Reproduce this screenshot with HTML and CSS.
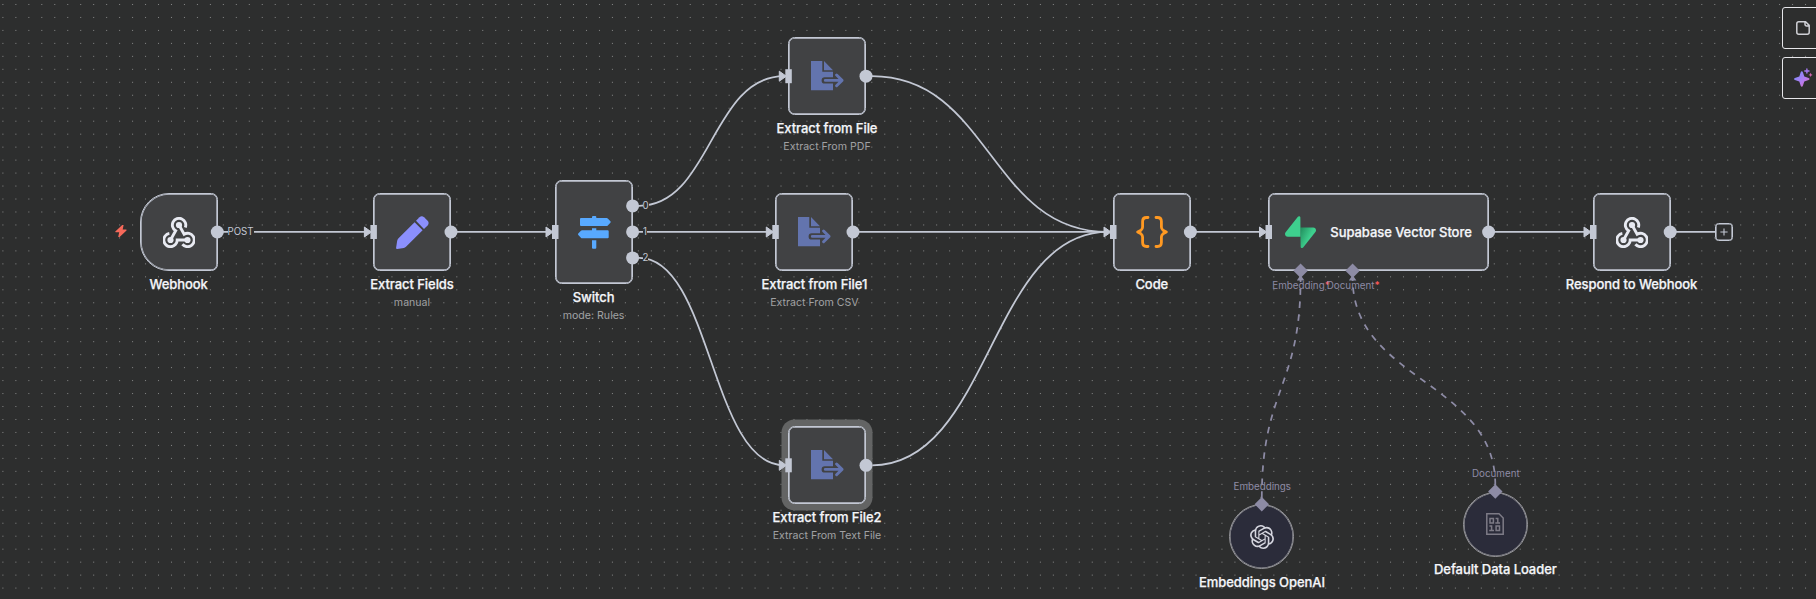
FILE: index.html
```html
<!DOCTYPE html>
<html lang="en">
<head>
<meta charset="utf-8">
<title>Workflow</title>
<link rel="stylesheet" href="styles.css">
</head>
<body>
<svg width="0" height="0" class="defs">
  <defs>
    <symbol id="webhook" viewBox="0 0 32 31">
      <g fill="none" stroke="#e8eaf2" stroke-width="2.9">
        <path d="M22.3 10.5A6.7 6.7 0 1 0 12.65 13.8L7.5 23"/>
        <path d="M6.34 16.4A6.7 6.7 0 1 0 14.2 23H24.5"/>
        <path d="M19.4 27.3A6.7 6.7 0 1 0 21.15 17.2L16 8"/>
      </g>
      <g fill="#e8eaf2"><circle cx="16" cy="8" r="3.1"/><circle cx="7.5" cy="23" r="3.1"/><circle cx="24.5" cy="23" r="3.1"/></g>
    </symbol>
    <symbol id="export" viewBox="0 0 33 30">
      <path fill="#6374ae" d="M0 0H11.3V10.8H22V16.2H13.8A3.2 3.2 0 0 0 13.8 22.6H22V29.3H0ZM13 0L22 9.2H13Z"/>
      <path fill="none" stroke="#6374ae" stroke-width="2.9" stroke-linecap="round" stroke-linejoin="round" d="M14.3 19.4H30M25.6 14L31 19.4L25.6 24.8"/>
    </symbol>
    <linearGradient id="sb" x1="54" y1="50" x2="90" y2="68" gradientUnits="userSpaceOnUse"><stop stop-color="#249361"/><stop offset="1" stop-color="#3ecf8e"/></linearGradient>
    <linearGradient id="spark" x1="0" y1="0" x2="1" y2="1"><stop offset="0.25" stop-color="#8b86f8"/><stop offset="0.6" stop-color="#b47cf0"/><stop offset="1" stop-color="#d75fa0"/></linearGradient>
  </defs>
</svg>

<main class="canvas">
  <svg class="edges" width="1816" height="599" viewBox="0 0 1816 599">
    <g class="wire">
      <path d="M217 231.9H368"/>
      <path d="M451 231.9H549"/>
      <path d="M639 205.8C711 205.8 711 76.2 784 76.2"/>
      <path d="M633 205.8H639M633 257.8H639"/>
      <path d="M633 231.9H770"/>
      <path d="M639 257.8C711 257.8 711 465.3 784 465.3"/>
      <path d="M872 76.2C990 76.2 990 231.9 1108 231.9"/>
      <path d="M853 231.9H1108"/>
      <path d="M872 465.3C990 465.3 990 231.9 1108 231.9"/>
      <path d="M1190 231.9H1264"/>
      <path d="M1488 231.9H1588"/>
      <path d="M1670 231.9H1715"/>
    </g>
    <g class="wire dashed">
      <path d="M1261.8 498C1261.8 388 1300.6 388 1300.6 278"/>
      <path d="M1495.3 485C1495.3 381 1352.6 381 1352.6 278"/>
    </g>
  </svg>

  <span class="edge-label post">POST</span>
  <span class="edge-label out0">0</span>
  <span class="edge-label out1">1</span>
  <span class="edge-label out2">2</span>

  <svg class="bolt" viewBox="0 0 12 12"><path d="M7.2 0L.3 6.4Q0 7.1.8 7.2H4.2L3.2 12H4.6L11.5 5.4Q11.9 4.7 11 4.6H7.7L8.6 0Z" fill="#f5695a"/></svg>

  <section class="node trigger webhook"><svg class="icon wh"><use href="#webhook"/></svg></section>
  <section class="node fields"><svg class="icon pencil" viewBox="0 0 33 33"><g fill="#8b8ffc"><path d="M18.6 6.2L26.6 14.2L10 30.8Q9 31.8 7.8 32L1.3 33Q0 33.1.1 31.8L1.1 25.2Q1.3 23.7 2.3 22.6Z"/><path d="M20 4.8L23.5 1.3Q25.8-.9 28.1 1.3L31.6 4.8Q33.6 7 31.6 9.4L28 12.9Z"/></g></svg></section>
  <section class="node switch"><svg class="icon signs" viewBox="0 0 33 33"><path fill="#58a9ff" d="M14 2V1Q14 0 15 0H17.3Q18.3 0 18.3 1V2H28.6Q29.3 2 29.8 2.5L32.4 5.3Q33 6 32.4 6.7L29.8 9.5Q29.3 10 28.6 10H3Q2 10 2 9V3Q2 2 3 2ZM14 12.2H18.3V14.3H29.7Q30.7 14.3 30.7 15.3V21.3Q30.7 22.3 29.7 22.3H4Q3.4 22.3 2.9 21.8L.3 19Q-.3 18.3.3 17.6L2.9 14.8Q3.4 14.3 4 14.3H14ZM14 24.3H18.3V31.8Q18.3 32.8 17.3 32.8H15Q14 32.8 14 31.8Z"/></svg></section>
  <section class="node file0"><svg class="icon export"><use href="#export"/></svg></section>
  <section class="node file1"><svg class="icon export"><use href="#export"/></svg></section>
  <section class="node file2 selected"><svg class="icon export"><use href="#export"/></svg></section>
  <section class="node code"><svg class="icon braces" viewBox="0 0 32 32"><g fill="none" stroke="#ff9922" stroke-width="2.8" stroke-linecap="round" stroke-linejoin="round"><path d="M12 1.5H10.5Q6.6 1.5 6.6 5.4V11Q6.6 13 5 14.2L1.7 16L5 17.8Q6.6 19 6.6 21V26.6Q6.6 30.5 10.5 30.5H12"/><path d="M20 1.5H21.5Q25.4 1.5 25.4 5.4V11Q25.4 13 27 14.2L30.3 16L27 17.8Q25.4 19 25.4 21V26.6Q25.4 30.5 21.5 30.5H20"/></g></svg></section>
  <section class="node store">
    <svg class="supabase" viewBox="0 0 109 113"><path fill="url(#sb)" d="M63.7076 110.284C60.8481 113.885 55.0502 111.912 54.9813 107.314L53.9738 40.0627L99.1935 40.0627C107.384 40.0627 111.952 49.5228 106.859 55.9374L63.7076 110.284Z"/><path fill="#3ecf8e" d="M45.317 2.07103C48.1765 -1.53037 53.9745 0.442937 54.0434 5.041L54.4849 72.2922H9.83113C1.64038 72.2922 -2.92775 62.8321 2.1655 56.4175L45.317 2.07103Z"/></svg>
    <span class="title">Supabase Vector Store</span>
  </section>
  <section class="node respond"><svg class="icon wh"><use href="#webhook"/></svg></section>
  <section class="node round openai"><svg class="gpt" viewBox="0 0 24 24"><path fill="#d5d6df" d="M22.2819 9.8211a5.9847 5.9847 0 0 0-.5157-4.9108 6.0462 6.0462 0 0 0-6.5098-2.9A6.0651 6.0651 0 0 0 4.9807 4.1818a5.9847 5.9847 0 0 0-3.9977 2.9 6.0462 6.0462 0 0 0 .7427 7.0966 5.98 5.98 0 0 0 .511 4.9107 6.051 6.051 0 0 0 6.5146 2.9001A5.9847 5.9847 0 0 0 13.2599 24a6.0557 6.0557 0 0 0 5.7718-4.2058 5.9894 5.9894 0 0 0 3.9977-2.9001 6.0557 6.0557 0 0 0-.7475-7.0729zm-9.022 12.6081a4.4755 4.4755 0 0 1-2.8764-1.0408l.1419-.0804 4.7783-2.7582a.7948.7948 0 0 0 .3927-.6813v-6.7369l2.02 1.1686a.071.071 0 0 1 .038.052v5.5826a4.504 4.504 0 0 1-4.4945 4.4944zm-9.6607-4.1254a4.4708 4.4708 0 0 1-.5346-3.0137l.142.0852 4.783 2.7582a.7712.7712 0 0 0 .7806 0l5.8428-3.3685v2.3324a.0804.0804 0 0 1-.0332.0615L9.74 19.9502a4.4992 4.4992 0 0 1-6.1408-1.6464zM2.3408 7.8956a4.485 4.485 0 0 1 2.3655-1.9728V11.6a.7664.7664 0 0 0 .3879.6765l5.8144 3.3543-2.0201 1.1685a.0757.0757 0 0 1-.071 0l-4.8303-2.7865A4.504 4.504 0 0 1 2.3408 7.872zm16.5963 3.8558L13.1038 8.364 15.1192 7.2a.0757.0757 0 0 1 .071 0l4.8303 2.7913a4.4944 4.4944 0 0 1-.6765 8.1042v-5.6772a.79.79 0 0 0-.407-.667zm2.0107-3.0231l-.142-.0852-4.7735-2.7818a.7759.7759 0 0 0-.7854 0L9.409 9.2297V6.8974a.0662.0662 0 0 1 .0284-.0615l4.8303-2.7866a4.4992 4.4992 0 0 1 6.6802 4.66zM8.3065 12.863l-2.02-1.1638a.0804.0804 0 0 1-.038-.0567V6.0742a4.4992 4.4992 0 0 1 7.3757-3.4537l-.142.0805L8.704 5.459a.7948.7948 0 0 0-.3927.6813zm1.0976-2.3654l2.602-1.4998 2.6069 1.4998v2.9994l-2.5974 1.4997-2.6067-1.4997Z"/></svg></section>
  <section class="node round loader"><svg class="binary" viewBox="0 0 18 22"><g fill="none" stroke="#7d7b86" stroke-width="1.5"><path d="M.8.8H13L17.2 5V21.2H.8Z"/><path d="M4 5.6H7.4V10H4ZM9.6 5.6H11.8V10.1M9.3 10.1H14M3.4 13H5.6V17.4M3.2 17.4H8M10.1 13H13.5V17.4H10.1Z"/></g></svg></section>

  <svg class="handles" width="1816" height="599" viewBox="0 0 1816 599">
    <defs>
      <g id="in"><rect x="-3" y="-7" width="6.5" height="14"/><path d="M-9-5L-2 0L-9 5Z" stroke-width="1" stroke="#c5cad6" stroke-linejoin="round"/></g>
    </defs>
    <g fill="#c3c8d4">
      <use href="#in" x="373.4" y="232"/><use href="#in" x="555" y="232"/><use href="#in" x="788.3" y="76.2"/>
      <use href="#in" x="775.3" y="232"/><use href="#in" x="788.3" y="465.3"/><use href="#in" x="1113" y="232"/>
      <use href="#in" x="1268.5" y="232"/><use href="#in" x="1593" y="232"/>
      <circle cx="217.3" cy="232" r="6.5"/><circle cx="451" cy="232" r="6.5"/><circle cx="632.6" cy="205.9" r="6.5"/>
      <circle cx="632.6" cy="231.9" r="6.5"/><circle cx="632.6" cy="257.9" r="6.5"/><circle cx="866" cy="76.2" r="6.5"/>
      <circle cx="853" cy="232" r="6.5"/><circle cx="866" cy="465.3" r="6.5"/><circle cx="1190.4" cy="232" r="6.5"/>
      <circle cx="1488.6" cy="232" r="6.5"/><circle cx="1670.2" cy="232" r="6.5"/>
    </g>
    <g fill="#8d8ba5">
      <path d="M1300.6 263.5l7.2 7.2-7.2 7.2-7.2-7.2Z"/><path d="M1352.6 263.5l7.2 7.2-7.2 7.2-7.2-7.2Z"/>
      <path d="M1261.8 497l7.2 7.2-7.2 7.2-7.2-7.2Z"/><path d="M1495.3 484.3l7.2 7.2-7.2 7.2-7.2-7.2Z"/>
      <path d="M1300.6 275l3.8 5.4h-7.6ZM1352.6 275l3.8 5.4h-7.6Z"/>
    </g>
  </svg>

  <div class="caption c-webhook"><b>Webhook</b></div>
  <div class="caption c-fields"><b>Extract Fields</b><span>manual</span></div>
  <div class="caption c-switch"><b>Switch</b><span>mode: Rules</span></div>
  <div class="caption c-file0"><b>Extract from File</b><span>Extract From PDF</span></div>
  <div class="caption c-file1"><b>Extract from File1</b><span>Extract From CSV</span></div>
  <div class="caption c-file2"><b>Extract from File2</b><span>Extract From Text File</span></div>
  <div class="caption c-code"><b>Code</b></div>
  <div class="caption c-respond"><b>Respond to Webhook</b></div>
  <div class="caption c-openai"><b>Embeddings OpenAI</b></div>
  <div class="caption c-loader"><b>Default Data Loader</b></div>

  <span class="port p-emb">Embedding<i>*</i></span>
  <span class="port p-doc">Document<i>*</i></span>
  <span class="port p-embs">Embeddings</span>
  <span class="port p-docs">Document</span>

  <button class="plus" aria-label="Add node"><svg viewBox="0 0 18 18"><path d="M9 5.4V12.6M5.4 9H12.6" stroke="#c3c8d4" stroke-width="1.1"/></svg></button>

  <aside class="tools">
    <button class="tool" aria-label="Add note"><svg viewBox="0 0 14 14"><path d="M2.8.8H9.6L13.2 4.4V11.2Q13.2 13.2 11.2 13.2H2.8Q.8 13.2.8 11.2V2.8Q.8.8 2.8.8ZM9 1V3.2Q9 4.9 10.7 4.9H13" fill="none" stroke="#cfd0d6" stroke-width="1.5" stroke-linejoin="round"/></svg></button>
    <button class="tool" aria-label="Assistant"><svg class="sparkle" viewBox="0 0 19 19"><path fill="url(#spark)" d="M7.8 3.2Q8.6 3.2 8.9 4.2L10.3 8.6L14.7 10Q15.6 10.3 15.6 11T14.7 12L10.3 13.4L8.9 17.8Q8.6 18.8 7.8 18.8T6.7 17.8L5.3 13.4L.9 12Q0 11.7 0 11T.9 10L5.3 8.6L6.7 4.2Q7 3.2 7.8 3.2Z"/><path stroke="#a579f2" stroke-width="1.4" stroke-linecap="round" d="M12.9.9V5.1M10.8 3H15"/><path fill="#d065b0" d="M16.6 4.8L17.3 6.2L18.7 6.9L17.3 7.6L16.6 9L15.9 7.6L14.5 6.9L15.9 6.2Z"/></svg></button>
  </aside>
</main>
</body>
</html>
```

FILE: styles.css
```css
* { box-sizing: border-box; }
body {
  margin: 0;
  overflow: hidden;
  background: #2d2e2e;
  font-family: Inter, "Liberation Sans", sans-serif;
}
.defs { position: absolute; }
.canvas {
  position: relative;
  width: 1816px;
  height: 599px;
  overflow: hidden;
  background-image: radial-gradient(circle at 50% 50%, #868787 0.6px, transparent 1px);
  background-size: 12.972px 12.972px;
  background-position: -3.6px -2px;
}
.edges, .handles { position: absolute; left: 0; top: 0; }
.handles { pointer-events: none; }
.wire { fill: none; stroke: #c3c8d4; stroke-width: 1.75; }
.dashed { stroke: #8d8ba5; stroke-dasharray: 6.5 6.5; }

.node {
  position: absolute;
  display: flex;
  align-items: center;
  justify-content: center;
  width: 78px;
  height: 78px;
  border: 1px solid #c3c8d4;
  border-radius: 6.5px;
  background: #414244;
  box-shadow: inset 0 0 0 0.7px #c3c8d4;
}
.trigger { border-radius: 29px 6.5px 6.5px 29px; }
.selected { box-shadow: inset 0 0 0 0.7px #c3c8d4, 0 0 0 6.5px #636464; }
.webhook { left: 139.7px; top: 193px; }
.fields { left: 373px; top: 193px; }
.switch { left: 555px; top: 180px; height: 104px; }
.file0 { left: 788.3px; top: 37.3px; }
.file1 { left: 775.3px; top: 193px; }
.file2 { left: 788.3px; top: 426.3px; }
.code { left: 1112.7px; top: 193px; }
.respond { left: 1592.6px; top: 193px; }
.store { left: 1268.3px; top: 193px; width: 220.4px; justify-content: flex-start; gap: 14px; padding-left: 16px; }
.round { width: 65px; height: 65px; border-radius: 50%; border-color: #97979b; background: #2b2c3a; box-shadow: inset 0 0 0 0.6px #97979b; }
.openai { left: 1229.3px; top: 504.3px; }
.loader { left: 1462.8px; top: 491.5px; }

.icon { width: 33px; height: 33px; }
.wh { width: 32px; height: 31px; }
.export { width: 33px; height: 30px; }
.braces { width: 32px; height: 32px; }
.supabase { width: 31px; height: 32.4px; flex: none; }
.gpt { width: 24px; height: 24px; }
.binary { width: 18px; height: 22px; }
.bolt { position: absolute; left: 114.5px; top: 225.3px; width: 12px; height: 12px; }

.title, .caption b {
  color: #f4f5f9;
  font-size: 13px;
  font-weight: 500;
  line-height: 16px;
  letter-spacing: -0.06px;
  white-space: nowrap;
  -webkit-text-stroke: 0.25px #f4f5f9;
}
.caption {
  position: absolute;
  display: flex;
  flex-direction: column;
  align-items: center;
  width: 160px;
  gap: 4px;
}
.caption span { color: #a0a1a3; font-size: 10.6px; line-height: 14px; white-space: nowrap; }
.c-webhook { left: 98.6px; top: 276px; }
.c-fields { left: 332px; top: 276px; }
.c-switch { left: 513.6px; top: 289px; }
.c-file0 { left: 747px; top: 120px; }
.c-file1 { left: 734.4px; top: 276px; }
.c-file2 { left: 747px; top: 509px; }
.c-code { left: 1071.8px; top: 276px; }
.c-respond { left: 1551.6px; top: 276px; }
.c-openai { left: 1182px; top: 574px; }
.c-loader { left: 1415.4px; top: 561px; }

.edge-label {
  position: absolute;
  background: #2d2e2e;
  color: #c3c8d4;
  font-size: 9.7px;
  line-height: 12px;
}
.post { left: 227.5px; top: 226px; }
.out0 { left: 642.5px; top: 200px; }
.out1 { left: 643px; top: 226px; }
.out2 { left: 642.5px; top: 252px; }

.port { position: absolute; color: #8d8ba5; font-size: 9.8px; line-height: 12px; white-space: nowrap; }
.port i { color: #ff5a5a; font-style: normal; font-weight: 600; }
.p-emb { left: 1272.3px; top: 279.5px; }
.p-doc { left: 1326.8px; top: 279.5px; }
.p-embs { left: 1233.5px; top: 480.5px; }
.p-docs { left: 1472px; top: 467.5px; }

.plus {
  position: absolute;
  left: 1715px;
  top: 223px;
  display: flex;
  width: 18px;
  height: 18px;
  padding: 0;
  border: 1px solid #c3c8d4;
  border-radius: 3.5px;
  background: #2d2e2e;
  box-shadow: inset 0 0 0 0.6px #c3c8d4;
}
.plus svg { width: 18px; height: 18px; margin: -1px; flex: none; }

.tools {
  position: absolute;
  left: 1782px;
  top: 7px;
  display: flex;
  flex-direction: column;
  gap: 8px;
}
.tool {
  display: flex;
  align-items: center;
  width: 42px;
  height: 42px;
  padding: 0 0 0 13px;
  border: 1px solid #e6e6ea;
  border-radius: 3px;
  background: #2d2e2e;
}
.tool svg { width: 14px; height: 14px; flex: none; }
.tool .sparkle { width: 19px; height: 19px; margin: -1px 0 0 -2px; }
```
